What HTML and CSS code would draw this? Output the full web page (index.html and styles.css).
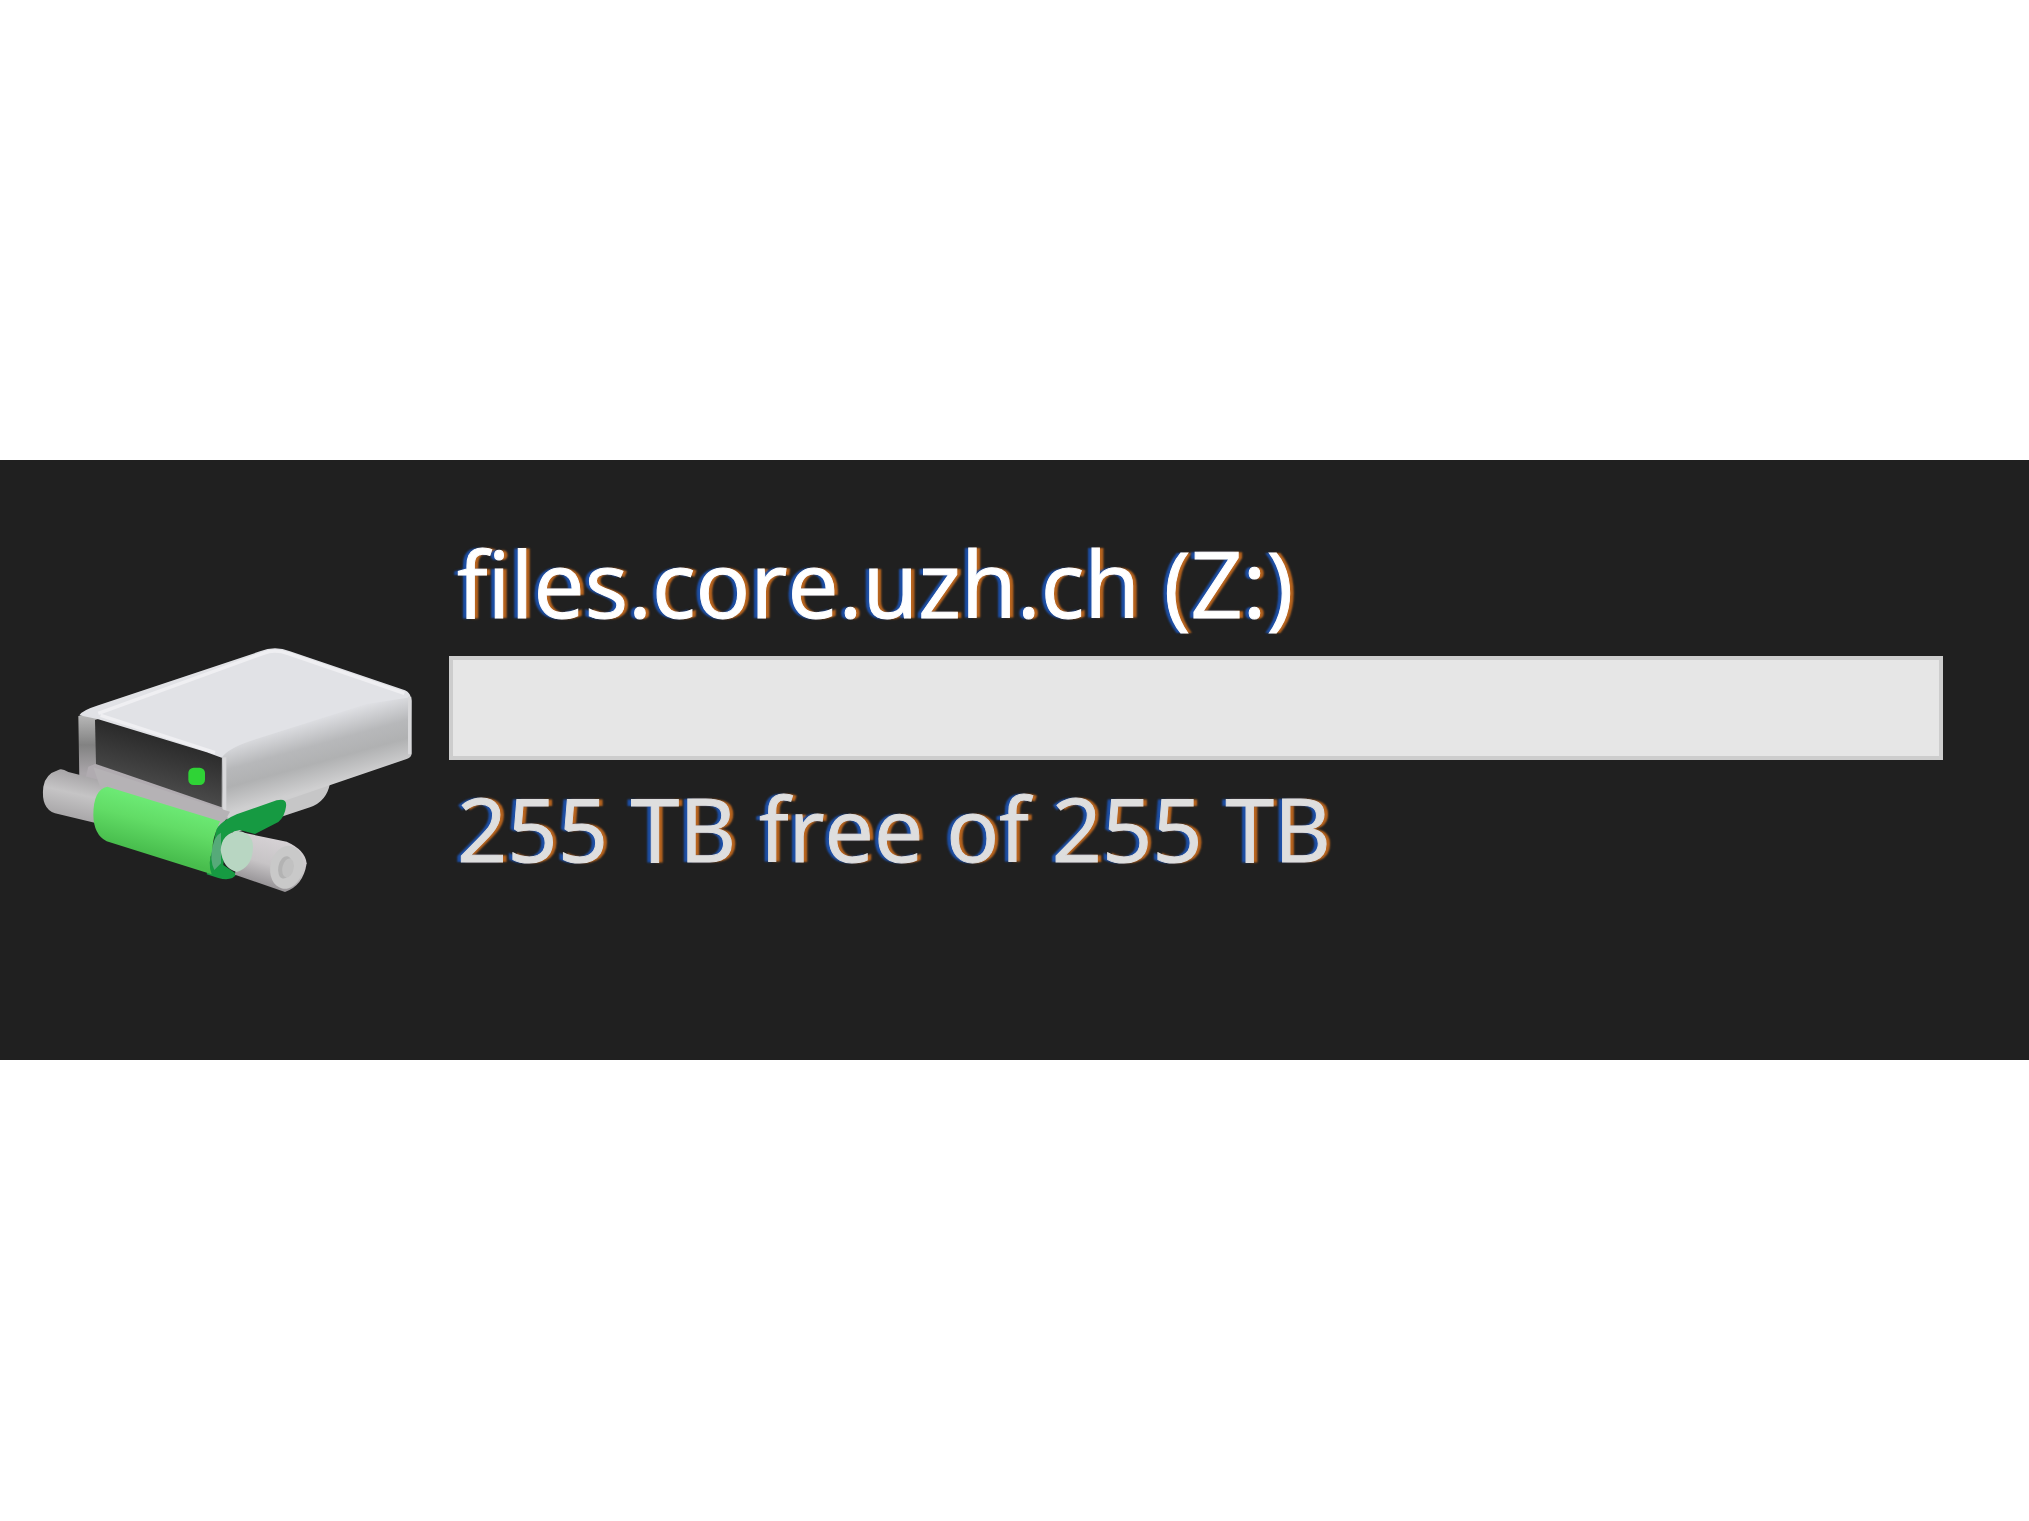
FILE: index.html
```html
<!DOCTYPE html>
<html lang="en">
<head>
<meta charset="utf-8">
<title>files.core.uzh.ch (Z:)</title>
<link rel="stylesheet" href="styles.css">
</head>
<body>
<main class="drive">
  <svg class="drive-icon" viewBox="0 0 1260 870" aria-hidden="true">
    <defs>
      <linearGradient id="side" gradientUnits="userSpaceOnUse" x1="850" y1="300" x2="905" y2="500">
        <stop offset="0" stop-color="#e1e2e6"/>
        <stop offset=".4" stop-color="#b7b8ba"/>
        <stop offset=".65" stop-color="#b0b1b2"/>
        <stop offset="1" stop-color="#cfcfd0"/>
      </linearGradient>
      <linearGradient id="frame" gradientUnits="userSpaceOnUse" x1="200" y1="290" x2="200" y2="460">
        <stop offset="0" stop-color="#b5b5b5"/>
        <stop offset=".5" stop-color="#828282"/>
        <stop offset="1" stop-color="#aaa6aa"/>
      </linearGradient>
      <linearGradient id="slot" gradientUnits="userSpaceOnUse" x1="400" y1="340" x2="360" y2="490">
        <stop offset="0" stop-color="#292929"/>
        <stop offset="1" stop-color="#494949"/>
      </linearGradient>
      <linearGradient id="sleeve" gradientUnits="userSpaceOnUse" x1="425" y1="550" x2="385" y2="700">
        <stop offset="0" stop-color="#6ce974"/>
        <stop offset=".4" stop-color="#62dc66"/>
        <stop offset="1" stop-color="#48bd4d"/>
      </linearGradient>
      <linearGradient id="pipe" gradientUnits="userSpaceOnUse" x1="170" y1="465" x2="140" y2="600">
        <stop offset="0" stop-color="#aaa8aa"/>
        <stop offset=".4" stop-color="#c5c4c5"/>
        <stop offset="1" stop-color="#a5a3a5"/>
      </linearGradient>
      <linearGradient id="pipe-end" gradientUnits="userSpaceOnUse" x1="740" y1="650" x2="700" y2="785">
        <stop offset="0" stop-color="#d5d1d4"/>
        <stop offset=".55" stop-color="#c7c4c6"/>
        <stop offset="1" stop-color="#989598"/>
      </linearGradient>
    </defs>
    <path fill="#c6c6c7" d="M620 590 L930 490 Q920 545 870 562 L800 585 L640 640Z"/>
    <path fill="url(#side)" d="M605 405 L700 330 L1100 210 L1168 228 Q1175 232 1175 242 V400 Q1175 412 1160 417 L940 492 L625 600 L600 590Z"/>
    <path fill="url(#frame)" d="M175 288 L235 280 L250 430 L600 550 L610 600 L580 610 L178 480Z"/>
    <path fill="#b0abb0" d="M205 440 L225 432 L600 555 L625 596 L570 610 L190 500Z"/>
    <path fill="url(#slot)" d="M225 300 L240 295 L605 405 V562 L228 432Z"/>
    <path fill="#e1e2e6" d="M178 286 Q185 272 235 256 L720 94 Q765 76 810 94 L1155 211 Q1170 218 1172 232 L1040 252 L700 360 Q625 384 605 413 L560 397 L235 298Z"/>
    <path fill="none" stroke="#efeff2" stroke-width="10" stroke-linejoin="round" d="M235 280 L730 100 Q765 86 805 101 L1153 220 M242 286 L585 398"/>
    <path fill="none" stroke="#d8d8da" stroke-width="10" d="M1169 230 V403 M614 412 V580"/>
    <rect x="505" y="443" width="50" height="52" rx="16" fill="#2fd336"/>
    <path fill="url(#pipe)" d="M70 500 Q76 462 115 450 Q125 444 145 456 L260 485 L230 610 L105 580 Q62 565 70 500Z"/>
    <path fill="#b5b2b5" d="M220 442 L630 575 L600 630 L245 515Z"/>
    <path fill="#169a42" d="M590 625 Q610 600 650 583 L770 541 Q802 533 798 560 Q794 590 775 606 L705 642 L660 630 Q625 635 615 660 L610 735 L650 762 Q635 785 595 774 L560 763Z"/>
    <path fill="url(#sleeve)" d="M220 585 Q220 508 262 500 L600 604 Q575 660 578 690 Q562 730 575 763 L260 664 Q221 644 220 585Z"/>
    <path fill="#56aa79" d="M578 680 Q583 648 603 638 L603 730 L583 750 Q568 718 578 680Z"/>
    <path fill="url(#pipe-end)" d="M660 636 L800 665 Q856 690 860 730 Q850 797 795 816 L645 764Z"/>
    <path fill="#b8d6c2" d="M602 690 Q605 640 655 633 Q706 640 698 695 Q693 742 650 756 Q608 745 602 690Z"/>
    <ellipse cx="800" cy="742" rx="49" ry="65" fill="#c9c9c9" transform="rotate(12 800 742)"/>
    <ellipse cx="795" cy="742" rx="20" ry="34" fill="#b3b3b3" transform="rotate(12 795 742)"/>
    <ellipse cx="804" cy="744" rx="17" ry="29" fill="#c1c1c1" transform="rotate(12 804 744)"/>
  </svg>
  <div class="drive-info">
    <label class="drive-name" for="usage">files.core.uzh.ch (Z:)</label>
    <progress class="drive-usage" id="usage" value="0" max="255"></progress>
    <p class="drive-space">255 TB free of 255 TB</p>
  </div>
</main>
</body>
</html>
```
FILE: styles.css
```css
* {
  box-sizing: border-box;
}

body {
  margin: 0;
  padding: 460px 0;
  background: #fff;
  font-family: "Open Sans", "Noto Sans", sans-serif;
}

.drive {
  display: flex;
  align-items: flex-start;
  gap: 9px;
  padding: 67px 86px 150px 20px;
  background: #202020;
}

.drive-icon {
  flex: none;
  width: 420px;
  height: 290px;
  margin-top: 93px;
}

.drive-info {
  display: flex;
  flex: 1;
  flex-direction: column;
  gap: 17px;
  min-width: 0;
}

.drive-name,
.drive-space {
  margin: 0;
  padding-left: 8px;
  white-space: nowrap;
  font-variant-ligatures: none;
  -webkit-text-stroke: 1px currentColor;
  text-shadow: -4px 0 2px #1d4fa6, 4px 0 2px #b8641e;
}

.drive-name {
  color: #fff;
  font-size: 91px;
  line-height: 112px;
}

.drive-space {
  color: #dedede;
  font-size: 88px;
  line-height: 102px;
}

.drive-usage {
  display: block;
  width: 100%;
  height: 104px;
  border: 4px solid #cdcdcd;
  background: #e6e6e6;
  appearance: none;
}

.drive-usage::-webkit-progress-bar {
  background: #e6e6e6;
}

.drive-usage::-webkit-progress-value {
  background: #26a0da;
}
```
